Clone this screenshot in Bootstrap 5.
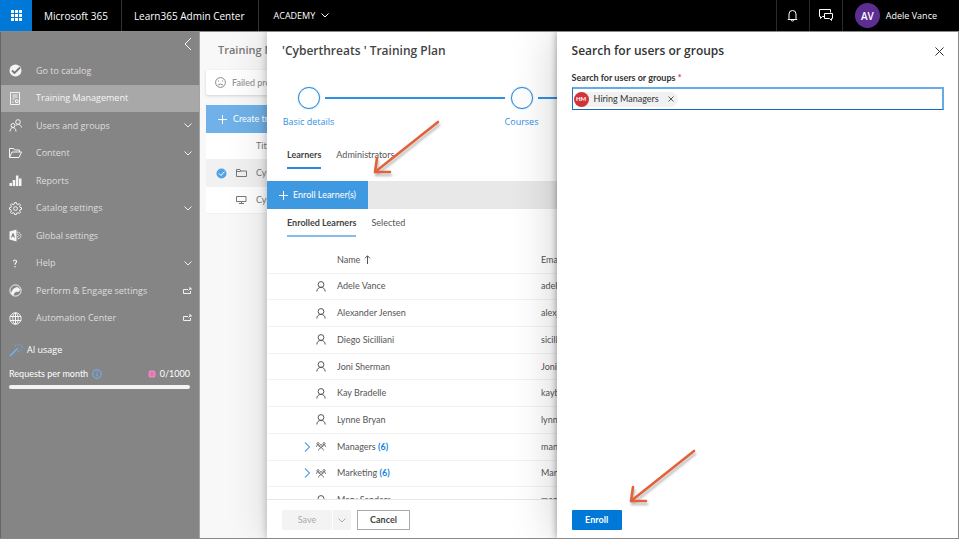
<!DOCTYPE html>
<html lang="en">
<head>
<meta charset="utf-8">
<meta name="viewport" content="width=device-width, initial-scale=1">
<title>Learn365 Admin Center</title>
<link href="https://cdn.jsdelivr.net/npm/bootstrap@5.3.0/dist/css/bootstrap.min.css" rel="stylesheet">
<style>
  :root { --seg: "Segoe UI", "Open Sans", "Noto Sans", sans-serif; --slim: "Segoe UI", Lato, "Open Sans", sans-serif; --brand: #0078d7; }
  body { font-family: var(--seg); font-size: 9px; line-height: 14px; color: #444; background: #f8f8f8; }
  svg { display: block; flex: none; fill: none; stroke: currentColor; stroke-width: 1; }
  .btn, .form-control { font-family: inherit; font-size: 9px; line-height: 14px; border-radius: 1px; }
  a { text-decoration: none; color: inherit; }

  .topbar { height: 31px; background: #000; color: #fff; font-size: 10px; flex: none; }
  .topbar > * { height: 31px; display: flex; align-items: center; color: #fff; }
  .launcher { width: 32px; background: var(--brand); justify-content: center; border: 0; padding: 0; }
  .brand-link { padding: 0 13px 0 12px; border-right: 1px solid #333; }
  .site-menu { background: none; border: 0; padding: 0 15px; gap: 6px; font-size: 9px; }
  .top-icon { background: none; border: 0; border-left: 1px solid #2b2b2b; width: 33px; justify-content: center; padding: 0; }
  .profile { border-left: 1px solid #2b2b2b; padding: 0 22px 0 12px; gap: 6px; font-size: 9px; }
  .avatar-lg { width: 25px; height: 25px; border-radius: 50%; background: #5c2e91; font-size: 10px; font-weight: 600; display: flex; align-items: center; justify-content: center; }

  .stage { border: 1px solid #8a8a8a; border-left: 0; }
  .sidebar { width: 200px; background: #858585; color: #dedede; border-left: 1px solid #666; border-right: 1px solid #a5a5a5; flex: none; }
  .collapse-btn { background: none; border: 0; color: #fff; padding: 5px 7px 6px; height: 25px; }
  .side-nav { display: grid; grid-auto-rows: 1fr; height: 275px; }
  .side-nav a { display: flex; align-items: center; padding: 0 7px 0 8px; }
  .side-nav .lead-icon { margin-right: 14px; color: #f4f4f4; }
  .side-nav .tail-icon { margin-left: auto; color: #f0f0f0; }
  .side-nav .current { background: #a8a8a8; color: #f6f6f6; }
  .ai-usage { color: #fff; padding: 11px 9px 0 8px; }
  .ai-title { margin-bottom: 10px; }
  .slim { font-family: var(--slim); }
  .meter { height: 4px; border-radius: 2px; background: #f3f3f3; }

  .backdrop-page { color: #777; padding: 0 0 0 6px; }
  .page-title { font-size: 11px; font-weight: 600; line-height: 16px; color: #777; padding: 10px 0 12px 12px; margin: 0; }
  .notice { background: #fff; box-shadow: 0 1px 3px rgba(0,0,0,.15); height: 25px; padding-left: 9px; gap: 6px; margin-bottom: 10px; border-radius: 2px; color: #888; }
  .create-btn { height: 28px; background: #6fb1e8; color: #fff; padding: 0 12px; gap: 6px; }
  .plan-list { background: #fff; font-family: var(--slim); }
  .plan-list .line { height: 27px; border-bottom: 1px solid #f2f2f2; padding-left: 10px; gap: 9px; }
  .plan-list .picked { background: #f1f1f1; }
  .pick { width: 11px; }

  .drawer { position: absolute; top: 0; bottom: 0; right: 0; background: #fff; display: flex; flex-direction: column; font-family: var(--slim); }
  .plan-drawer { left: 267px; box-shadow: 0 0 8px rgba(0,0,0,.25), 0 0 40px rgba(0,0,0,.14); }
  .search-drawer { width: 41.9%; box-shadow: 0 0 7px rgba(0,0,0,.38), 0 0 44px rgba(0,0,0,.2); color: #333; padding: 0 14px 8px 15px; }
  .drawer-title { font-family: var(--seg); font-size: 12px; line-height: 18px; font-weight: 600; margin: 0; }
  .plan-title { padding: 10px 0 0 15px; }

  .stepper { display: flex; list-style: none; margin: 27px 0 0; padding: 0 0 0 31px; color: #2f8fe0; font-family: var(--seg); }
  .step { width: 21px; display: flex; flex-direction: column; align-items: center; white-space: nowrap; gap: 6px; flex: none; }
  .ring { width: 22px; height: 22px; border: 1px solid #1d86dd; border-radius: 50%; flex: none; box-shadow: 0 0 1px #1d86dd; }
  .rail { width: 180px; height: 2px; background: #2f90e3; margin: 10px 6px 0; flex: none; }
  .rail-last { width: auto; flex: 1 1 0; }

  .tabs { display: flex; gap: 15px; padding-left: 20px; }
  .main-tabs { margin: 19px 0 12px; }
  .subtabs { margin: 7px 0 10px; }
  .tabs button { background: none; border: 0; padding: 0 0 5px; color: #555; border-bottom: 2px solid transparent; }
  .tabs .on { font-weight: 700; color: #444; border-color: #2b88d8; }
  .subtabs .on { border-color: #85bdee; }
  .toolbar { background: #e8e8e8; height: 28px; flex: none; }
  .toolbar .btn { background: #3f99e1; color: #fff; border-radius: 0; height: 28px; padding: 0 12px; gap: 5px; }
  .people-scroll { min-height: 0; }
  .people { width: 100%; height: 267px; border-collapse: collapse; table-layout: fixed; color: #555; }
  .people th { font-weight: 400; }
  .people th, .people td { padding: 0; height: 26px; border-bottom: 1px solid #f2f2f2; line-height: 14px; white-space: nowrap; }
  .people .c-open { width: 48px; } .people .c-icon { width: 22px; } .people .c-name { width: 204px; }
  .people td svg { position: static; margin-left: 1px; }
  .people td:first-child svg { margin-left: auto; margin-right: 4px; color: #5aa7ea; }
  .count { color: #1481dc; font-weight: 700; }
  .drawer-foot { border-top: 1px solid #e6e6e6; padding: 10px 15px 8px; gap: 6px; flex: none; }
  .save { background: #f3f3f3; color: #aaa; height: 20px; width: 50px; padding: 0; border: 0; }
  .save-more { background: #f3f3f3; color: #aaa; height: 20px; padding: 0 5px; border: 0; border-left: 1px solid #fff; }
  .cancel { height: 20px; padding: 0; width: 53px; border: 1px solid #aaa; background: #fff; font-weight: 700; color: #444; border-radius: 0; }

  .search-head { padding: 10px 0 6px; }
  .field-label { font-weight: 700; margin: 5px 0 2px; line-height: 14px; }
  .picker { border: 2px solid #64abe8; border-left: 1px solid #1a73c8; border-bottom: 1px solid #1a66c0; height: 23px; padding: 0 1px; }
  .chip { background: #f1f1f1; border-radius: 8px; height: 15px; padding-right: 4px; gap: 5px; }
  .chip-face { width: 15px; height: 15px; border-radius: 50%; background: #d13438; color: #fff; font-size: 6px; font-weight: 700; display: flex; align-items: center; justify-content: center; }
  .bare { background: none; border: 0; padding: 0; color: inherit; }
  .picker input { border: 0; outline: 0; min-width: 0; background: none; font-size: 9px; }
  .enroll { background: var(--brand); color: #fff; font-weight: 700; height: 20px; width: 50px; padding: 0; }
  .pointer { position: absolute; stroke: #e2633a; stroke-width: 2.6; stroke-linecap: round; stroke-linejoin: round; filter: drop-shadow(1px 3px 1px rgba(0,0,0,.25)); }
  .pointer-a { left: 104px; top: 86px; }
  .pointer-b { left: 70px; bottom: 31px; }
</style>
</head>
<body class="vh-100 overflow-hidden d-flex flex-column">

<header class="topbar d-flex">
  <button class="launcher" aria-label="App launcher">
    <svg width="11" height="11" viewBox="0 0 11 11" fill="#fff"><path stroke="none" fill="#fff" d="M0 0h3v3H0zM4 0h3v3H4zM8 0h3v3H8zM0 4h3v3H0zM4 4h3v3H4zM8 4h3v3H8zM0 8h3v3H0zM4 8h3v3H4zM8 8h3v3H8z"/></svg>
  </button>
  <a class="brand-link" href="#">Microsoft 365</a>
  <a class="brand-link" href="#">Learn365 Admin Center</a>
  <button class="site-menu">ACADEMY <svg width="8" height="5" viewBox="0 0 8 5"><path d="M.5.5 4 4 7.500.5"/></svg></button>
  <button class="top-icon ms-auto" aria-label="Notifications">
    <svg width="11" height="13" viewBox="0 0 11 13"><path d="M2 9.500V5a3.500 3.500 0 0 1 7 0v4.500l1 1H1zM4 10.500a1.500 1.500 0 0 0 3 0"/></svg>
  </button>
  <button class="top-icon" aria-label="Chat">
    <svg width="14" height="13" viewBox="0 0 14 13"><path d="M5 7.500H3.500L1.500 9.500v-2h-1v-7h11v3M5.500 4.500h8v5h-1v2l-2-2h-5z"/></svg>
  </button>
  <a class="profile" href="#"><span class="avatar-lg">AV</span>Adele Vance</a>
</header>

<div class="stage position-relative flex-grow-1 d-flex overflow-hidden">
  <nav class="sidebar" aria-label="Main">
    <div class="d-flex justify-content-end">
      <button class="collapse-btn" aria-label="Collapse menu"><svg width="8" height="14" viewBox="0 0 8 14"><path d="M7 1 1 7l6 6"/></svg></button>
    </div>
    <div class="side-nav">
      <a href="#"><svg class="lead-icon" width="13" height="13" viewBox="0 0 13 13"><circle cx="6.500" cy="6.500" r="6" fill="#f4f4f4" stroke="none"/><path d="M3 6.500 5.500 9 11 3.500" stroke="#777" stroke-width="1.800"/></svg>Go to catalog</a>
      <a href="#" class="current"><svg class="lead-icon" width="13" height="13" viewBox="0 0 13 13"><path d="M1.500.5h9v12h-9zM3.500 3h5M3.500 5h5M3.500 7h2M3 10h1.500M6.500 8H9v2.500H6.500z"/></svg>Training Management</a>
      <a href="#"><svg class="lead-icon" width="13" height="13" viewBox="0 0 13 13"><circle cx="9" cy="3" r="2.300"/><circle cx="4" cy="6.500" r="2"/><path d="M1 12.500c0-5.200 6-5.200 6 0M7 6.500c2-2 5-1 5.500 2"/></svg>Users and groups<svg class="tail-icon" width="8" height="5" viewBox="0 0 8 5"><path d="M.5.5 4 4 7.500.5"/></svg></a>
      <a href="#"><svg class="lead-icon" width="13" height="13" viewBox="0 0 13 13"><path d="M.5 10.500v-9h4l1 1.500h5v2M.5 10.500l2.500-5.500h9.500l-2.500 5.500z"/></svg>Content<svg class="tail-icon" width="8" height="5" viewBox="0 0 8 5"><path d="M.5.5 4 4 7.500.5"/></svg></a>
      <a href="#"><svg class="lead-icon" width="13" height="13" viewBox="0 0 13 13"><path d="M.5 9H3v3H.5zM3.700 6h2.500v6H3.700zM6.900 1.500h2.500V12H6.900zM10 4.500h2.500V12H10z" fill="currentColor" stroke="none"/></svg>Reports</a>
      <a href="#"><svg class="lead-icon" width="13" height="13" viewBox="0 0 13 13"><circle cx="6.500" cy="6.500" r="1.900"/><path d="M5.600.6h1.800l.4 1.600 1 .4L10.300 1.700l1.200 1.200-.9 1.500.4 1 1.500.3v1.700l-1.500.4-.4 1 .9 1.500-1.200 1.200-1.500-.9-1 .4-.4 1.500H5.600l-.4-1.500-1-.4-1.500.9-1.200-1.200.9-1.500-.4-1L.5 7.400V5.700L2 5.400l.4-1-.9-1.500 1.200-1.200 1.500.9 1-.4z"/></svg>Catalog settings<svg class="tail-icon" width="8" height="5" viewBox="0 0 8 5"><path d="M.5.5 4 4 7.500.5"/></svg></a>
      <a href="#"><svg class="lead-icon" width="13" height="13" viewBox="0 0 13 13"><path d="M.5 2.500 7.500.5v12l-7-2z" fill="currentColor" stroke="none"/><path d="M2.500 8.500 4 4.500l1.500 4M3 7h2" stroke="#777"/><path d="M8 3c2 0 4 1.500 4 3.500S10 10 8 10M8 5c1 0 2 .7 2 1.500S9 8 8 8" stroke-dasharray="1.500 .7"/></svg>Global settings</a>
      <a href="#"><svg class="lead-icon" width="13" height="13" viewBox="0 0 13 13"><path d="M4.500 4.500C4.500 2.500 7.500 2.500 7.500 4.500 7.500 6 6 5.800 6 7.800M6 9v1.200" stroke-width="1.200"/></svg>Help<svg class="tail-icon" width="8" height="5" viewBox="0 0 8 5"><path d="M.5.5 4 4 7.500.5"/></svg></a>
      <a href="#"><svg class="lead-icon" width="13" height="13" viewBox="0 0 13 13"><circle cx="6.500" cy="6.500" r="5.600"/><path d="M2 10C2.500 6.500 4.500 3.700 8.500 3L11.500 5.500 9.500 8C7 7 5 8.500 4.500 11.500z" fill="currentColor" stroke="none"/></svg>Perform &amp; Engage settings<svg class="tail-icon" width="9" height="8" viewBox="0 0 9 8"><path d="M5 2.500H.5v4h7V4M6 1h2v2M8 1 5.500 3.500"/></svg></a>
      <a href="#"><svg class="lead-icon" width="13" height="13" viewBox="0 0 13 13"><circle cx="6.500" cy="6.500" r="5.700"/><ellipse cx="6.500" cy="6.500" rx="2.700" ry="5.700"/><path d="M1 4.500h11M1 8.500h11M6.500 1v11"/></svg>Automation Center<svg class="tail-icon" width="9" height="8" viewBox="0 0 9 8"><path d="M5 2.500H.5v4h7V4M6 1h2v2M8 1 5.500 3.500"/></svg></a>
    </div>
    <section class="ai-usage">
      <div class="ai-title d-flex align-items-center gap-1">
        <svg width="14" height="14" viewBox="0 0 14 14" color="#6bb5ff"><path d="M1 13 8.500 5.500" stroke-width="1.400"/><path d="M9 .5V2M12.500 4H14M12.500 7.500l-1-1M6 2l1 1M12 1.500l-1 1M9.500 8v1.500" stroke-width=".9"/></svg>
        <span>AI usage</span>
      </div>
      <div class="d-flex align-items-center slim">
        <span>Requests per month</span>
        <svg class="ms-1" width="10" height="10" viewBox="0 0 10 10" color="#6bb5ff"><circle cx="5" cy="5" r="4.300"/><path d="M5 4.300v3M5 2.500v1"/></svg>
        <svg class="ms-auto me-1" width="8" height="8" viewBox="0 0 8 8" color="#c65a9d"><circle cx="4" cy="4" r="3.800" fill="#f48fc8" stroke="none"/><path d="M4 0v8M0 3h8M0 5h8" stroke-width=".6"/></svg>
        <span>0/1000</span>
      </div>
      <div class="meter mt-1" role="progressbar" aria-label="Requests used" aria-valuenow="0" aria-valuemin="0" aria-valuemax="1000"></div>
    </section>
  </nav>

  <main class="backdrop-page flex-grow-1">
    <h1 class="page-title">Training Management</h1>
    <div class="notice slim d-flex align-items-center"><svg width="11" height="11" viewBox="0 0 11 11"><circle cx="5.500" cy="5.500" r="4.900"/><path d="M3 8q2.500-2 5 0M3.500 3.500v1M7.500 3.500v1"/></svg>Failed processes</div>
    <div class="plan-list">
      <button class="create-btn btn w-100 d-flex align-items-center rounded-0 border-0"><svg width="9" height="9" viewBox="0 0 9 9"><path d="M4.500 0v9M0 4.500h9"/></svg>Create training</button>
      <div class="line d-flex align-items-center"><span class="pick"></span><span class="pick"></span><span>Title</span></div>
      <div class="line picked d-flex align-items-center"><svg width="11" height="11" viewBox="0 0 11 11"><circle cx="5.500" cy="5.500" r="5" fill="#4fa3e6" stroke="none"/><path d="M3 5.500 5 7.500l3.500-4" stroke="#fff"/></svg><svg width="11" height="10" viewBox="0 0 11 10"><path d="M.5 8.500v-7h3.500l1 1.500h5.500v5.500zM.5 3.500h3.500l1-.5"/></svg><span>Cyberthreats</span></div>
      <div class="line d-flex align-items-center"><span class="pick"></span><svg width="11" height="10" viewBox="0 0 11 10"><path d="M.5 1.500h9.500v5H.5zM3 8.500h5M5.500 6.500v2"/></svg><span>Cyber basics</span></div>
    </div>
  </main>

  <section class="drawer plan-drawer" aria-label="Training plan">
    <h2 class="drawer-title plan-title">'Cyberthreats ' Training Plan</h2>
    <ol class="stepper">
      <li class="step"><span class="ring"></span>Basic details</li>
      <li class="rail" aria-hidden="true"></li>
      <li class="step"><span class="ring"></span>Courses</li>
      <li class="rail rail-last" aria-hidden="true"></li>
    </ol>
    <div class="tabs main-tabs"><button class="on">Learners</button><button>Administrators</button></div>
    <div class="toolbar"><button class="btn d-flex align-items-center border-0"><svg width="9" height="9" viewBox="0 0 9 9"><path d="M4.500 0v9M0 4.500h9"/></svg>Enroll Learner(s)</button></div>
    <div class="tabs subtabs"><button class="on">Enrolled Learners</button><button>Selected</button></div>
    <div class="people-scroll flex-grow-1 overflow-hidden">
      <table class="people">
        <colgroup><col class="c-open"><col class="c-icon"><col class="c-name"><col></colgroup>
        <thead><tr><th></th><th></th><th><span class="d-flex align-items-center gap-1">Name <svg width="7" height="9" viewBox="0 0 7 9"><path d="M3.500 9V.8M1 3.300 3.500.8 6 3.300"/></svg></span></th><th>Email</th></tr></thead>
        <tbody id="rows"></tbody>
      </table>
    </div>
    <div class="drawer-foot d-flex">
      <div class="d-flex"><button class="btn save">Save</button><button class="btn save-more" aria-label="More save options"><svg width="8" height="5" viewBox="0 0 8 5"><path d="M.5.5 4 4 7.500.5"/></svg></button></div>
      <button class="btn cancel">Cancel</button>
    </div>
    <svg class="pointer pointer-a" width="72" height="60" viewBox="0 0 72 60" aria-hidden="true"><path d="M67 4 4 54M6 40 4 54l15 0"/></svg>
  </section>

  <section class="drawer search-drawer" aria-label="Search for users or groups">
    <div class="search-head d-flex align-items-center justify-content-between">
      <h2 class="drawer-title">Search for users or groups</h2>
      <button class="bare" aria-label="Close"><svg width="9" height="9" viewBox="0 0 9 9"><path d="m.5.5 8 8M8.500.5l-8 8"/></svg></button>
    </div>
    <label class="field-label" for="who">Search for users or groups <span class="text-danger">*</span></label>
    <div class="picker d-flex align-items-center">
      <span class="chip d-flex align-items-center"><span class="chip-face">HM</span>Hiring Managers<button class="bare ms-1" aria-label="Remove Hiring Managers"><svg width="6" height="6" viewBox="0 0 6 6"><path stroke-width=".8" d="m.5.5 5 5M5.500.5l-5 5"/></svg></button></span>
      <input id="who" type="text" class="flex-grow-1">
    </div>
    <div class="mt-auto"><button class="btn enroll border-0">Enroll</button></div>
    <svg class="pointer pointer-b" width="72" height="60" viewBox="0 0 72 60" aria-hidden="true"><path d="M67 4 4 54M6 40 4 54l15 0"/></svg>
  </section>
</div>

<script src="https://cdn.jsdelivr.net/npm/bootstrap@5.3.0/dist/js/bootstrap.bundle.min.js"></script>
<script>
  const person = '<svg width="10" height="11" viewBox="0 0 10 11"><circle cx="5" cy="3.500" r="2.900"/><path d="M.8 10.500C1 7.500 3 6.400 5 6.400s4 1.100 4.200 4.100"/></svg>';
  const group = '<svg width="10" height="9" viewBox="0 0 10 9"><g stroke-width=".8"><circle cx="2" cy="1.700" r="1.100"/><circle cx="8" cy="1.700" r="1.100"/><circle cx="5" cy="4" r="1.400"/><path d="M.3 5c.2-2.600 2.500-2.600 3 0M6.700 5c.5-2.600 2.800-2.600 3 0M2.500 8.500c.5-3.500 4.500-3.500 5 0"/></g></svg>';
  const open = '<svg width="7" height="10" viewBox="0 0 7 10"><path d="m1 .5 4.500 4.500L1 9.500" stroke-width="1.200"/></svg>';
  const data = [["Adele Vance","adelev"],["Alexander Jensen","alexj"],["Diego Sicilliani","sicillianid"],["Joni Sherman","Jonis"],["Kay Bradelle","kayb"],["Lynne Bryan","lynneb"],["Managers","managers",6],["Marketing","Marketing",6],["Mary Sanders","marys"]];
  document.getElementById("rows").innerHTML = data.map(([name, mail, n]) =>
    `<tr><td>${n ? open : ""}</td><td>${n ? group : person}</td><td>${name}${n ? ` <span class="count">(${n})</span>` : ""}</td><td>${mail}</td></tr>`).join("");
</script>
</body>
</html>
